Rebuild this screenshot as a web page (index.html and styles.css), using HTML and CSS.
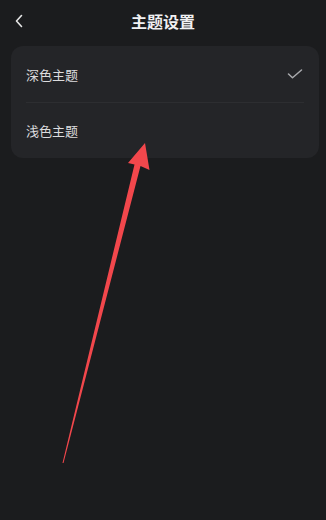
FILE: index.html
```html
<!DOCTYPE html>
<html lang="zh">
<head>
<meta charset="utf-8">
<link rel="stylesheet" href="styles.css">
</head>
<body>
<div class="page">
  <header class="header">
    <svg class="back" width="10" height="14" viewBox="0 0 10 14"><path d="M7.5 1.5 L2.5 7 L7.5 12.5" fill="none" stroke="#e6e6e6" stroke-width="1.6" stroke-linecap="round" stroke-linejoin="round"/></svg>
    <h1 class="title">主题设置</h1>
  </header>
  <div class="card">
    <div class="row">
      <span class="label">深色主题</span>
      <svg class="check" width="16" height="10" viewBox="0 0 16 10"><path d="M1.5 5 L5.5 8.8 L14.5 1" fill="none" stroke="#a9aaad" stroke-width="1.5" stroke-linecap="round" stroke-linejoin="round"/></svg>
    </div>
    <div class="divider"></div>
    <div class="row">
      <span class="label">浅色主题</span>
    </div>
  </div>
  <svg class="arrow" width="326" height="520" viewBox="0 0 326 520"><polygon points="145,143 149.5,170 140.5,166 63.5,463 62.5,463 134.5,164.5 128,163" fill="#f2474c"/></svg>
</div>
</body>
</html>
```
FILE: styles.css
```css
html, body {
  margin: 0;
  padding: 0;
  background: #1b1c1e;
}
.page {
  position: relative;
  width: 326px;
  height: 520px;
  overflow: hidden;
  font-family: "Noto Sans CJK SC", "Noto Sans", sans-serif;
  color: #e2e2e4;
}
.header {
  position: relative;
  height: 40px;
  display: flex;
  align-items: center;
  justify-content: center;
}
.back {
  position: absolute;
  left: 14px;
  top: 14px;
}
.title {
  margin: 0;
  font-size: 16px;
  font-weight: 700;
  color: #f0f0f2;
  line-height: 1;
  margin-top: 1px;
}
.card {
  margin: 6px 7px 0 11px;
  background: #242528;
  border-radius: 12px;
  padding: 0 15px;
}
.row {
  height: 56px;
  display: flex;
  align-items: center;
  justify-content: space-between;
}
.row:last-child {
  height: 55px;
}
.label {
  font-size: 13px;
  color: #dcdcde;
  line-height: 1;
}
.check {
  margin-right: 1px;
}
.divider {
  height: 1px;
  background: #2d2e31;
}
.arrow {
  position: absolute;
  left: 0;
  top: 0;
  pointer-events: none;
}
```
